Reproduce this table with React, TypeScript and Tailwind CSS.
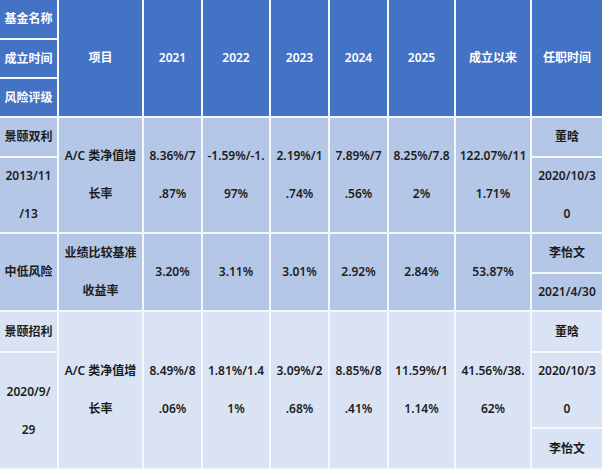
import React from "react";

type CellProps = {
  lines: string[];
  className?: string;
  dark?: boolean;
};

const Cell: React.FC<CellProps> = ({ lines, className = "", dark }) => (
  <div
    className={`flex flex-col items-center justify-center text-center font-semibold ${
      dark ? "bg-[#4472c4] text-white" : "text-[#1c1c1c]"
    } ${className}`}
  >
    {lines.map((l, i) => (
      <div key={i} className="leading-[38px] whitespace-nowrap">
        {l}
      </div>
    ))}
  </div>
);

const years = ["2021", "2022", "2023", "2024", "2025"];

const App: React.FC = () => {
  const g1 = "bg-[#b4c7e7]";
  const g3 = "bg-[#dae3f3]";
  return (
    <div
      className="w-[602px] h-[470px] overflow-hidden bg-[#f4f7fc] text-[12px]"
      style={{ fontFamily: '"Noto Sans", "Noto Sans CJK SC", sans-serif' }}
    >
      <div className="grid grid-cols-[57px_83px_57px_66px_57px_57px_65px_74px_70px] grid-rows-[38px_37px_37px_38px_74px_38px_36px_39px_74px_39px] gap-[2px]">
        {/* header */}
        <Cell dark lines={["基金名称"]} className="col-start-1 row-start-1" />
        <Cell dark lines={["成立时间"]} className="col-start-1 row-start-2" />
        <Cell dark lines={["风险评级"]} className="col-start-1 row-start-3" />
        <Cell dark lines={["项目"]} className="col-start-2 row-start-1 row-span-3" />
        {years.map((y, i) => (
          <Cell
            key={y}
            dark
            lines={[y]}
            className={`row-start-1 row-span-3 ${
              ["col-start-3", "col-start-4", "col-start-5", "col-start-6", "col-start-7"][i]
            }`}
          />
        ))}
        <Cell dark lines={["成立以来"]} className="col-start-8 row-start-1 row-span-3" />
        <Cell dark lines={["任职时间"]} className="col-start-9 row-start-1 row-span-3" />

        {/* 景颐双利 */}
        <Cell lines={["景颐双利"]} className={`col-start-1 row-start-4 ${g1}`} />
        <Cell lines={["2013/11", "/13"]} className={`col-start-1 row-start-5 ${g1}`} />
        <Cell lines={["A/C 类净值增", "长率"]} className={`col-start-2 row-start-4 row-span-2 ${g1}`} />
        <Cell lines={["8.36%/7", ".87%"]} className={`col-start-3 row-start-4 row-span-2 ${g1}`} />
        <Cell lines={["-1.59%/-1.", "97%"]} className={`col-start-4 row-start-4 row-span-2 ${g1}`} />
        <Cell lines={["2.19%/1", ".74%"]} className={`col-start-5 row-start-4 row-span-2 ${g1}`} />
        <Cell lines={["7.89%/7", ".56%"]} className={`col-start-6 row-start-4 row-span-2 ${g1}`} />
        <Cell lines={["8.25%/7.8", "2%"]} className={`col-start-7 row-start-4 row-span-2 ${g1}`} />
        <Cell lines={["122.07%/11", "1.71%"]} className={`col-start-8 row-start-4 row-span-2 ${g1}`} />
        <Cell lines={["董晗"]} className={`col-start-9 row-start-4 ${g1}`} />
        <Cell lines={["2020/10/3", "0"]} className={`col-start-9 row-start-5 ${g1}`} />

        {/* 中低风险 */}
        <Cell lines={["中低风险"]} className={`col-start-1 row-start-6 row-span-2 ${g1}`} />
        <Cell lines={["业绩比较基准", "收益率"]} className={`col-start-2 row-start-6 row-span-2 ${g1}`} />
        <Cell lines={["3.20%"]} className={`col-start-3 row-start-6 row-span-2 ${g1}`} />
        <Cell lines={["3.11%"]} className={`col-start-4 row-start-6 row-span-2 ${g1}`} />
        <Cell lines={["3.01%"]} className={`col-start-5 row-start-6 row-span-2 ${g1}`} />
        <Cell lines={["2.92%"]} className={`col-start-6 row-start-6 row-span-2 ${g1}`} />
        <Cell lines={["2.84%"]} className={`col-start-7 row-start-6 row-span-2 ${g1}`} />
        <Cell lines={["53.87%"]} className={`col-start-8 row-start-6 row-span-2 ${g1}`} />
        <Cell lines={["李怡文"]} className={`col-start-9 row-start-6 ${g1}`} />
        <Cell lines={["2021/4/30"]} className={`col-start-9 row-start-7 ${g1}`} />

        {/* 景颐招利 */}
        <Cell lines={["景颐招利"]} className={`col-start-1 row-start-8 ${g3}`} />
        <Cell lines={["2020/9/", "29"]} className={`col-start-1 row-start-9 row-span-2 ${g3}`} />
        <Cell lines={["A/C 类净值增", "长率"]} className={`col-start-2 row-start-8 row-span-3 ${g3}`} />
        <Cell lines={["8.49%/8", ".06%"]} className={`col-start-3 row-start-8 row-span-3 ${g3}`} />
        <Cell lines={["1.81%/1.4", "1%"]} className={`col-start-4 row-start-8 row-span-3 ${g3}`} />
        <Cell lines={["3.09%/2", ".68%"]} className={`col-start-5 row-start-8 row-span-3 ${g3}`} />
        <Cell lines={["8.85%/8", ".41%"]} className={`col-start-6 row-start-8 row-span-3 ${g3}`} />
        <Cell lines={["11.59%/1", "1.14%"]} className={`col-start-7 row-start-8 row-span-3 ${g3}`} />
        <Cell lines={["41.56%/38.", "62%"]} className={`col-start-8 row-start-8 row-span-3 ${g3}`} />
        <Cell lines={["董晗"]} className={`col-start-9 row-start-8 ${g3}`} />
        <Cell lines={["2020/10/3", "0"]} className={`col-start-9 row-start-9 ${g3}`} />
        <Cell lines={["李怡文"]} className={`col-start-9 row-start-10 ${g3}`} />
      </div>
    </div>
  );
};

export default App;
